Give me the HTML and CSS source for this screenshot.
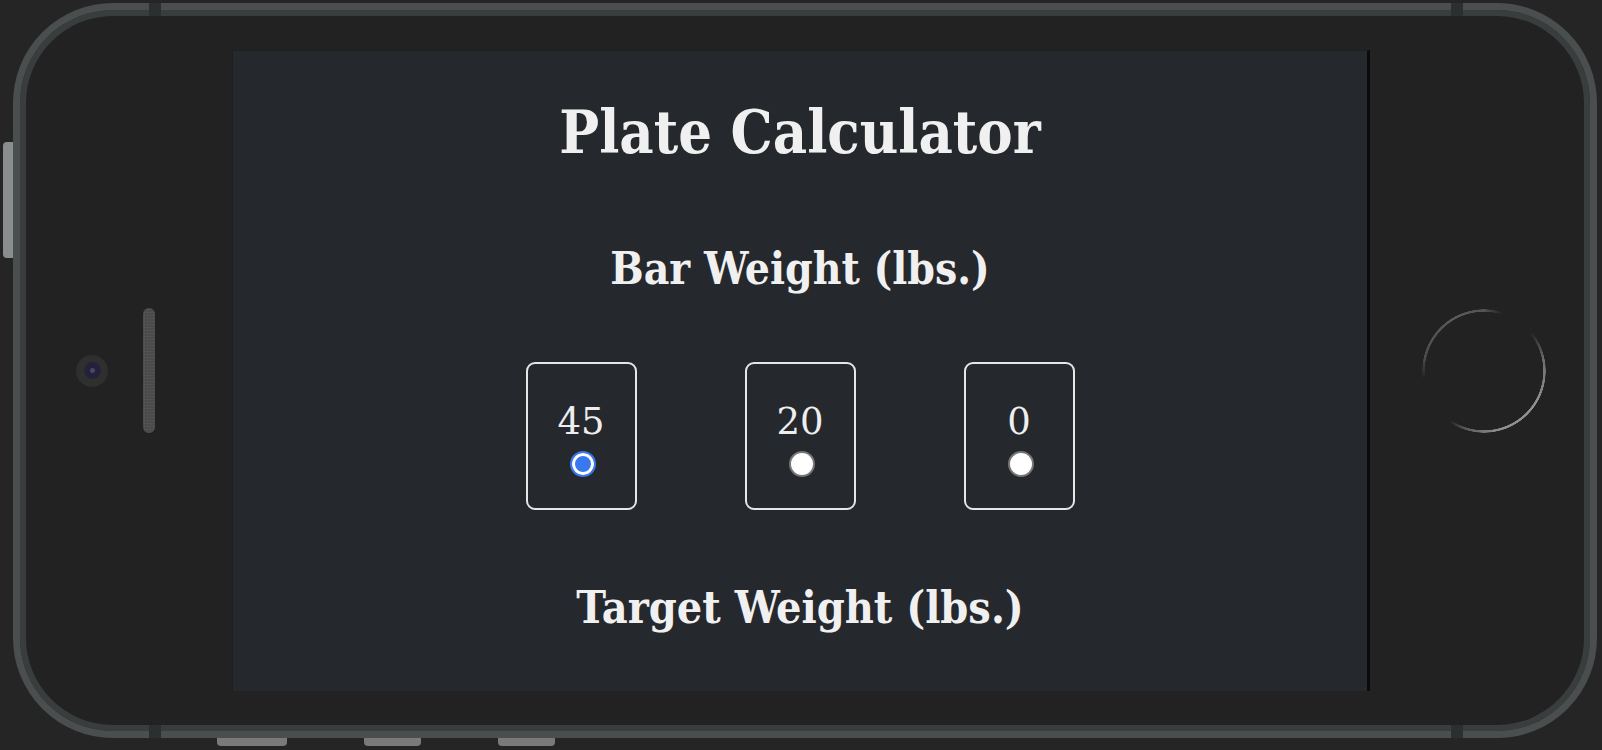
FILE: index.html
```html
<!DOCTYPE html>
<html lang="en">
<head>
<meta charset="utf-8">
<title>Plate Calculator</title>
<link rel="stylesheet" href="styles.css">
</head>
<body>
  <div class="device">
    <div class="frame">
      <span class="notch notch-tl"></span>
      <span class="notch notch-tr"></span>
      <span class="notch notch-bl"></span>
      <span class="notch notch-br"></span>
      <span class="side-button"></span>

      <div class="bezel bezel-left">
        <div class="camera"><span class="lens"></span></div>
        <div class="speaker"></div>
      </div>

      <main class="screen">
        <h1 class="title">Plate Calculator</h1>
        <h2 class="section-title">Bar Weight (lbs.)</h2>
        <div class="bar-options">
          <label class="bar-option">
            <span class="bar-value">45</span>
            <input class="bar-radio" type="radio" name="bar" value="45" checked>
          </label>
          <label class="bar-option">
            <span class="bar-value">20</span>
            <input class="bar-radio" type="radio" name="bar" value="20">
          </label>
          <label class="bar-option">
            <span class="bar-value">0</span>
            <input class="bar-radio" type="radio" name="bar" value="0">
          </label>
        </div>
        <h2 class="section-title section-target">Target Weight (lbs.)</h2>
      </main>

      <div class="bezel bezel-right">
        <div class="home-button"></div>
      </div>
    </div>
    <div class="bottom-buttons">
      <span class="bottom-button wide"></span>
      <span class="bottom-button"></span>
      <span class="bottom-button"></span>
    </div>
  </div>
</body>
</html>
```

FILE: styles.css
```css
* { box-sizing: border-box; }

html, body {
  margin: 0;
  padding: 0;
  background: #252525;
  overflow: hidden;
}

body {
  width: 1602px;
  height: 750px;
}

.device {
  padding: 3px 0 0 13px;
}

.frame {
  position: relative;
  width: 1584px;
  height: 735px;
  border: 7px solid #4a4e4e;
  border-radius: 100px;
  background: #222222;
  box-shadow: inset 0 0 0 6px #393d3d;
  padding: 6px;
  display: flex;
  align-items: center;
}

.notch {
  position: absolute;
  width: 12px;
  height: 13px;
  background: #2b2f2f;
}
.notch-tl { left: 129px; top: -7px; }
.notch-tr { left: 1431px; top: -7px; }
.notch-bl { left: 129px; bottom: -7px; }
.notch-br { left: 1431px; bottom: -7px; }

.side-button {
  position: absolute;
  left: -17px;
  top: 132px;
  width: 10px;
  height: 116px;
  border-radius: 4px 0 0 4px;
  background: #8a8d8e;
}

.bezel {
  height: 100%;
  display: flex;
  align-items: center;
}

.bezel-left {
  width: 206px;
  padding-left: 50px;
  gap: 35px;
}

.camera {
  width: 32px;
  height: 32px;
  border-radius: 50%;
  background: #2f2f2f;
  display: flex;
  align-items: center;
  justify-content: center;
}

.lens {
  width: 17px;
  height: 17px;
  border-radius: 50%;
  background: radial-gradient(circle at 50% 50%, #4a4766 0 2px, #24223a 3px 100%);
}

.speaker {
  width: 12px;
  height: 125px;
  border-radius: 6px;
  background-color: #3a3a3a;
  background-image:
    radial-gradient(circle, #5a5a5a 0.9px, transparent 1.1px),
    radial-gradient(circle, #5a5a5a 0.9px, transparent 1.1px);
  background-size: 3px 3px;
  background-position: 0 0, 1.5px 1.5px;
}

.screen {
  width: 1138px;
  height: 641px;
  flex: none;
  background: #25282d;
  border-right: 3px solid #0b0b0b;
  border-top: 1px solid #1d1f23;
  border-left: 1px solid #1d1f23;
  color: #f0f0f0;
  text-align: center;
  padding-top: 52px;
  font-family: "DejaVu Serif Condensed", "DejaVu Serif", "Liberation Serif", serif;
}

.title {
  margin: 0;
  font-size: 59px;
  line-height: 60px;
  font-weight: bold;
}

.section-title {
  margin: 84px 0 0;
  font-size: 44px;
  line-height: 44px;
  font-weight: bold;
}

.section-target {
  margin-top: 75px;
  font-size: 44.5px;
}

.bar-options {
  margin-top: 71px;
  display: flex;
  justify-content: center;
  gap: 108px;
}

.bar-option {
  width: 111px;
  height: 148px;
  border: 2px solid #e6e6e6;
  border-radius: 9px;
  display: flex;
  flex-direction: column;
  align-items: center;
  padding-top: 39px;
  gap: 10px;
  cursor: pointer;
}

.bar-value {
  font-family: "DejaVu Serif", "Liberation Serif", serif;
  font-size: 37px;
  line-height: 38px;
  font-weight: normal;
  color: #eeeeee;
}

.bar-radio {
  appearance: none;
  -webkit-appearance: none;
  margin: 0 0 0 3px;
  width: 26px;
  height: 26px;
  border-radius: 50%;
  border: 2px solid #767676;
  background: #ffffff;
}

.bar-radio:checked {
  border-color: #3a78ef;
  background: #3a78ef;
  box-shadow: inset 0 0 0 3px #ffffff;
}

.bezel-right {
  flex: 1;
  padding-left: 52px;
}

.home-button {
  width: 124px;
  height: 124px;
  border-radius: 50%;
  background: conic-gradient(
    rgba(90,90,90,0.9) 0deg,
    rgba(90,90,90,0) 18deg,
    rgba(120,120,120,0) 50deg,
    #707070 80deg,
    #909090 120deg,
    #909090 165deg,
    #5a5a5a 198deg,
    rgba(70,70,70,0) 215deg,
    rgba(70,70,70,0) 262deg,
    #4c4c4c 282deg,
    #5a5a5a 330deg,
    rgba(90,90,90,0.9) 360deg
  );
  -webkit-mask: radial-gradient(circle, transparent 59px, #000 59.5px, #000 61.5px, transparent 62px);
  mask: radial-gradient(circle, transparent 59px, #000 59.5px, #000 61.5px, transparent 62px);
}

.bottom-buttons {
  display: flex;
  padding-left: 204px;
  gap: 77px;
}

.bottom-button {
  width: 57px;
  height: 8px;
  background: #7a7a7a;
  border-radius: 0 0 4px 4px;
}

.bottom-button.wide {
  width: 70px;
}
```
